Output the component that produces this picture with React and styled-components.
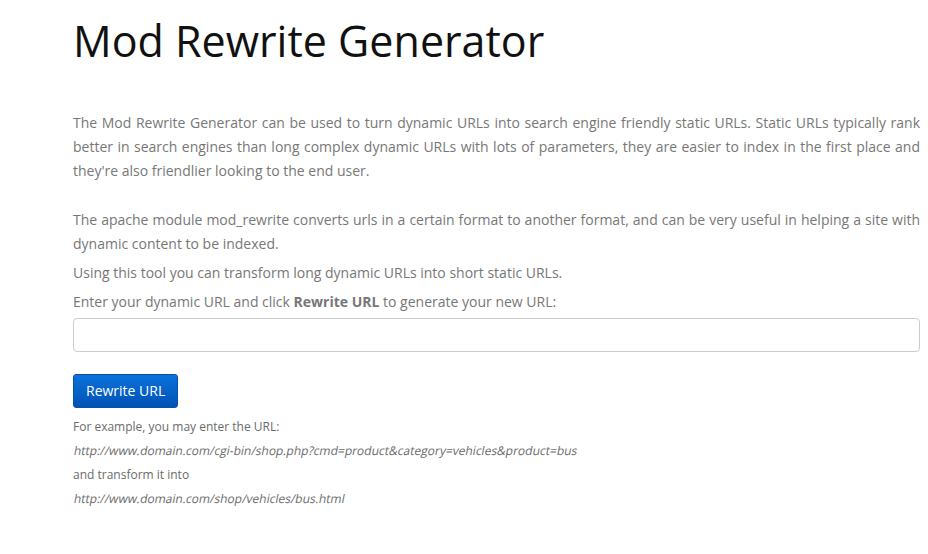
import styled, { createGlobalStyle } from "styled-components";

const GlobalStyle = createGlobalStyle`
  body {
    margin: 0;
    background: #fff;
    font-family: "Open Sans", "Liberation Sans", sans-serif;
  }
`;

const Page = styled.main`
  width: 847px;
  padding: 17px 0 0 73px;
`;

const Title = styled.h1`
  margin: 0 0 46.5px;
  font-size: 43px;
  line-height: 1.1;
  font-weight: 400;
  color: #111;
`;

const Text = styled.p`
  margin: 0 0 ${(p) => p.$gap ?? 5}px;
  font-size: 14px;
  line-height: 24px;
  color: #777;
  text-align: justify;
`;

const UrlInput = styled.input`
  display: block;
  box-sizing: border-box;
  width: 100%;
  height: 34px;
  margin: 0 0 22px;
  border: 1px solid #ccc;
  border-radius: 4px;
  font: inherit;
  font-size: 14px;
  padding: 6px 12px;
`;

const Button = styled.button`
  display: block;
  height: 34px;
  padding: 0 12px;
  border: 1px solid #0652ab;
  border-radius: 3px;
  background: linear-gradient(#0b72db, #0052b4);
  color: #fff;
  font-family: inherit;
  font-size: 14px;
  cursor: pointer;
`;

const Examples = styled.div`
  margin-top: 7px;
  font-size: 12px;
  line-height: 24px;
  color: #6b6b6b;
`;

/* the reference shows a slanted upright face, not the true italic */
const Url = styled.span`
  display: inline-block;
  transform: skewX(-11deg);
  transform-origin: 0 70%;
`;

export default function App() {
  return (
    <Page>
      <GlobalStyle />
      <Title>Mod Rewrite Generator</Title>
      <Text $gap={25}>
        The Mod Rewrite Generator can be used to turn dynamic URLs into search engine friendly static
        URLs. Static URLs typically rank better in search engines than long complex dynamic URLs with
        lots of parameters, they are easier to index in the first place and they're also friendlier
        looking to the end user.
      </Text>
      <Text>
        The apache module mod_rewrite converts urls in a certain format to another format, and can be
        very useful in helping a site with dynamic content to be indexed.
      </Text>
      <Text>Using this tool you can transform long dynamic URLs into short static URLs.</Text>
      <Text $gap={4}>
        Enter your dynamic URL and click <b>Rewrite URL</b> to generate your new URL:
      </Text>
      <UrlInput type="text" />
      <Button>Rewrite URL</Button>
      <Examples>
        <div>For example, you may enter the URL:</div>
        <div>
          <Url>http://www.domain.com/cgi-bin/shop.php?cmd=product&amp;category=vehicles&amp;product=bus</Url>
        </div>
        <div>and transform it into</div>
        <div>
          <Url>http://www.domain.com/shop/vehicles/bus.html</Url>
        </div>
      </Examples>
    </Page>
  );
}
